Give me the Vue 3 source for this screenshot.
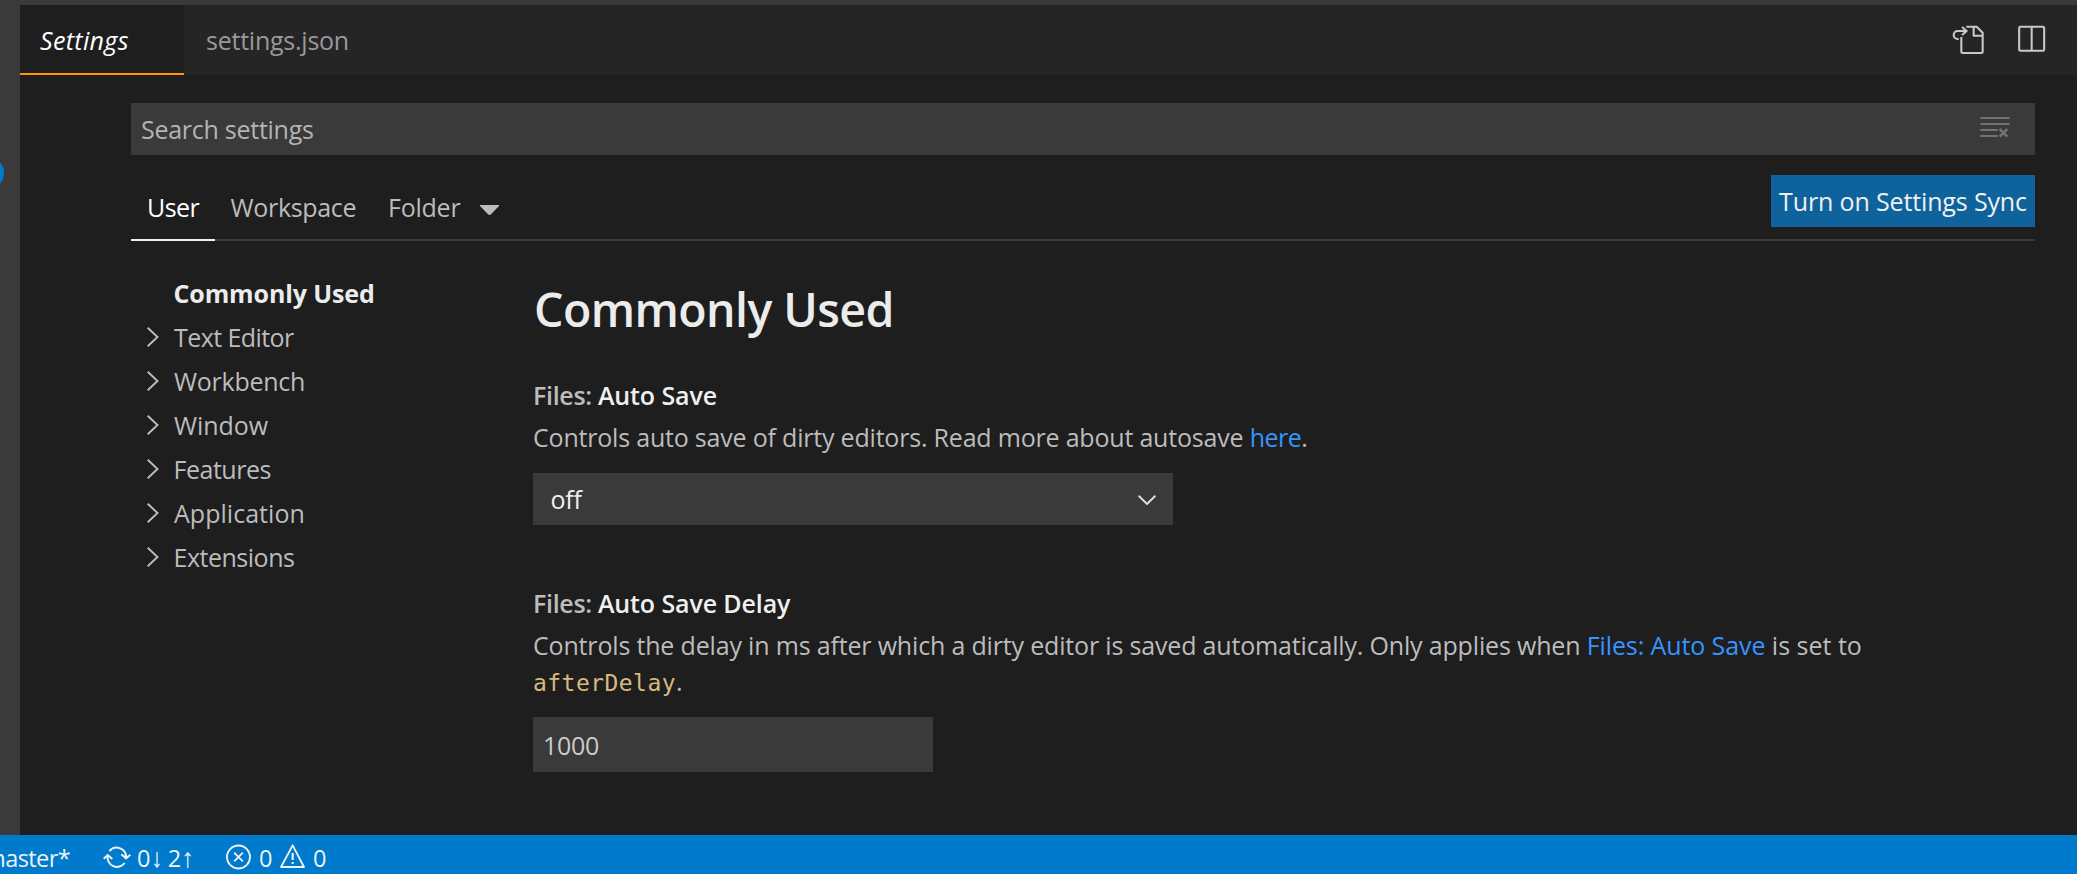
<script setup>
const sections = ['Text Editor', 'Workbench', 'Window', 'Features', 'Application', 'Extensions']
const sectionClass = (name) => 'toc-' + name.toLowerCase().replace(' ', '-')
</script>

<template>
  <div class="app-shell">
    <div class="top-strip"></div>
    <div class="main">
      <aside class="side"><span class="badge"></span></aside>
      <div class="editor">
        <header class="tabs">
          <div class="tab active">Settings</div>
          <div class="tab">settings.json</div>
          <div class="actions">
            <svg class="i-file" viewBox="33 30 99 90" fill="none" stroke="currentColor" stroke-width="6.2" stroke-linejoin="round">
              <path d="M76 35H107L125 53V110Q125 114 121 114H65Q61 114 61 110V66" />
              <path d="M98 36V62H124" />
              <path d="M77 48H50A12 12 0 0 0 50 72H53M63 36L77 48L63 60" />
            </svg>
            <svg class="i-split" viewBox="233 30 84 84" fill="none" stroke="currentColor" stroke-width="6.2">
              <rect x="236.5" y="35.5" width="75" height="72" rx="4" />
              <path d="M274 36V107" />
            </svg>
          </div>
        </header>

        <div class="body">
          <div class="search">
            <span>Search settings</span>
            <svg class="i-clear" viewBox="30 33 90 69" fill="none" stroke="currentColor" stroke-width="6">
              <path d="M31 39H119M31 57H119M31 75H83M31 93H83" />
              <path d="M89 72L112 95M112 72L89 95" stroke-width="8" />
            </svg>
          </div>

          <nav class="scopes">
            <div class="scope user">User</div>
            <div class="scope workspace">Workspace</div>
            <div class="scope folder">Folder</div>
            <svg class="i-caret" viewBox="0 0 19 10"><path d="M0 0H19V1L11 9.3Q9.5 10.5 8 9.3L0 1Z" fill="currentColor" /></svg>
            <button class="sync">Turn on Settings Sync</button>
          </nav>

          <div class="columns">
            <ul class="toc">
              <li class="current">Commonly Used</li>
              <li v-for="s in sections" :key="s" :class="sectionClass(s)">
                <svg class="i-chev" viewBox="0 0 12 20" fill="none" stroke="currentColor" stroke-width="1.9"><path d="M0.7 0.7L10.5 10L0.7 19.3" /></svg>
                <span>{{ s }}</span>
              </li>
            </ul>

            <section class="settings">
              <h2>Commonly Used</h2>
              <div class="setting">
                <h3><span>Files: </span>Auto Save</h3>
                <p class="d1">Controls auto save of dirty editors. Read more about autosave <a>here</a>.</p>
                <div class="select">
                  <span>off</span>
                  <svg class="i-down" viewBox="0 0 18 10" fill="none" stroke="currentColor" stroke-width="1.9"><path d="M0.6 0.7L9 9L17.4 0.7" /></svg>
                </div>
              </div>
              <div class="setting">
                <h3><span>Files: </span>Auto Save Delay</h3>
                <p class="d2">Controls the delay in ms after which a dirty editor is saved automatically. Only applies when <a>Files: Auto Save</a><span class="tail"> is set to</span><br /><code>afterDelay</code>.</p>
                <div class="number">1000</div>
              </div>
            </section>
          </div>
        </div>
      </div>
    </div>

    <footer class="status">
      <div class="branch"><span>master*</span></div>
      <svg class="i-sync" viewBox="24 21 84 72" fill="none" stroke="currentColor" stroke-width="6">
        <path d="M43 39A28.5 28.5 0 0 1 93 60" />
        <path d="M38 53A28.5 28.5 0 0 0 89 75" />
        <path d="M26 62L38 51L52 63M79 49L93 61L106 50" />
      </svg>
      <span class="counts">0<b>↓</b> 2<b>↑</b></span>
      <svg class="i-err" viewBox="393 18 75 78" fill="none" stroke="currentColor" stroke-width="5.5">
        <circle cx="430.5" cy="57" r="34.5" />
        <path d="M417.5 44L443.5 70M443.5 44L417.5 70" />
      </svg>
      <span class="n1">0</span>
      <svg class="i-warn" viewBox="555 18 75 78" fill="none" stroke="currentColor" stroke-width="5.5" stroke-linejoin="round">
        <path d="M593 22L627 87H558Z" />
        <path d="M593 45V66M593 72V78" stroke-width="6.5" />
      </svg>
      <span class="n2">0</span>
    </footer>
  </div>
</template>

<style>
body { margin: 0; background: #1e1e1e; }
</style>

<style scoped>
.app-shell {
  width: 2077px; height: 874px; overflow: hidden; display: flex; flex-direction: column;
  background: #1e1e1e; color: #bcbcbc; font: 25px "Open Sans", "Noto Sans", sans-serif; letter-spacing: -0.24px;
}
.app-shell * { box-sizing: border-box; }
svg { display: block; flex: none; }
.top-strip { height: 5px; background: #3a3a3a; flex: none; }
.main { height: 830px; display: flex; flex: none; }
.side { width: 20px; margin-top: -5px; background: #3a3a3a; position: relative; overflow: hidden; }
.badge { position: absolute; left: -27px; top: 157px; width: 31px; height: 32px; border-radius: 50%; background: #007acc; }
.editor { width: 2057px; }

.tabs { height: 70px; display: flex; background: #252526; }
.tab { line-height: 70px; padding-left: 22px; color: #999; }
.tab.active { width: 164px; padding-left: 20px; line-height: 71px; background: #1e1e1e; color: #fff; font-style: italic; letter-spacing: 0.35px; border-bottom: 2px solid #ff9800; }
.actions { margin-left: auto; display: flex; padding-top: 20px; color: #c9c9c6; }
.i-file { width: 33px; height: 30px; }
.i-split { width: 28px; height: 28px; margin-left: 33px; margin-right: 31.5px; }

.body { padding: 28px 42px 0 111px; }
.search { height: 52px; background: #3a3a3a; display: flex; justify-content: space-between; padding: 0 25px 0 10px; line-height: 52px; color: #b4b4b4; letter-spacing: -0.26px; }
.i-clear { width: 30px; height: 23px; margin-top: 13px; color: #727272; }

.scopes { height: 66px; margin-top: 20px; display: flex; border-bottom: 2px solid #3c3c3c; line-height: 64px; }
.user { width: 84px; height: 66px; padding-left: 16px; color: #fff; border-bottom: 2px solid #f0f0f0; letter-spacing: -0.56px; }
.workspace { padding-left: 15.5px; width: 156px; letter-spacing: -0.32px; }
.folder { padding-left: 17px; width: 109px; }
.i-caret { width: 19px; height: 10px; margin-top: 30px; }
.sync { margin: 0 0 0 auto; width: 264px; height: 52px; padding: 0; border: 0; background: #0e639c; color: #f0f0f0; font: inherit; line-height: 52px; letter-spacing: -0.14px; text-align: center; }

.columns { display: flex; padding-top: 30px; }
.toc { width: 402px; margin: 0; padding: 0 0 0 16px; list-style: none; line-height: 44px; }
.toc li { height: 44px; display: flex; align-items: center; letter-spacing: -0.26px; }
.toc .current { padding-left: 26.5px; font-weight: 700; color: #ececec; letter-spacing: -0.12px; }
.i-chev { width: 12px; height: 20px; margin-right: 15px; }
.toc .toc-text-editor { letter-spacing: -0.57px; }
.toc .toc-window { letter-spacing: -0.05px; }
.toc .toc-features, .toc .toc-extensions { letter-spacing: -0.48px; }
.toc .toc-features span, .toc .toc-extensions span { margin-left: -0.5px; }
.toc .toc-application { letter-spacing: 0.03px; }

h2, h3, p { margin: 0; }
h2 { height: 106px; padding-left: 1px; line-height: 77px; font-size: 46.5px; font-weight: 600; color: #ececec; letter-spacing: -0.58px; }
h3 { font-size: 25px; line-height: 36px; font-weight: 600; color: #f0f0f0; letter-spacing: -0.12px; }
h3 span { color: #bcbcbc; letter-spacing: -0.32px; }
.setting { height: 208px; }
p { margin-top: 6px; line-height: 36px; white-space: nowrap; }
.d1 { letter-spacing: -0.2px; }
.d1 a { letter-spacing: -0.5px; }
.d2 { letter-spacing: -0.172px; }
.d2 a { letter-spacing: -0.1px; }
.tail { letter-spacing: 0; }
a { color: #3794ff; }
code { font: 23px/30px "DejaVu Sans Mono", monospace; letter-spacing: 0.45px; color: #d7ba7d; }
.select { width: 640px; height: 52px; margin-top: 18px; padding: 0 17px 0 17.5px; background: #3a3a3a; line-height: 52px; display: flex; justify-content: space-between; color: #f0f0f0; letter-spacing: -0.2px; }
.i-down { width: 18px; height: 10px; margin-top: 22px; color: #e0e0e0; }
.number { width: 400px; height: 55px; margin-top: 18px; padding-left: 10px; background: #3a3a3a; line-height: 56px; color: #cccccc; letter-spacing: -0.3px; }

.status { height: 39px; flex: none; display: flex; background: #007acc; color: #eef2f5; line-height: 46px; font-size: 23.5px; overflow: hidden; }
.branch { width: 103px; display: flex; justify-content: flex-end; padding-right: 33px; }
.branch span { letter-spacing: -0.6px; }
.i-sync { width: 28px; height: 24px; margin-top: 10px; }
.counts { width: 95px; padding-left: 6px; letter-spacing: -0.15px; white-space: nowrap; }
.counts b { font-weight: 400; font-size: 27px; line-height: 30px; letter-spacing: -2px; }
.i-err { width: 25px; height: 26px; margin-top: 9px; }
.n1 { width: 29px; padding-left: 8px; }
.i-warn { width: 25px; height: 26px; margin-top: 9px; }
.n2 { padding-left: 8px; }
</style>
